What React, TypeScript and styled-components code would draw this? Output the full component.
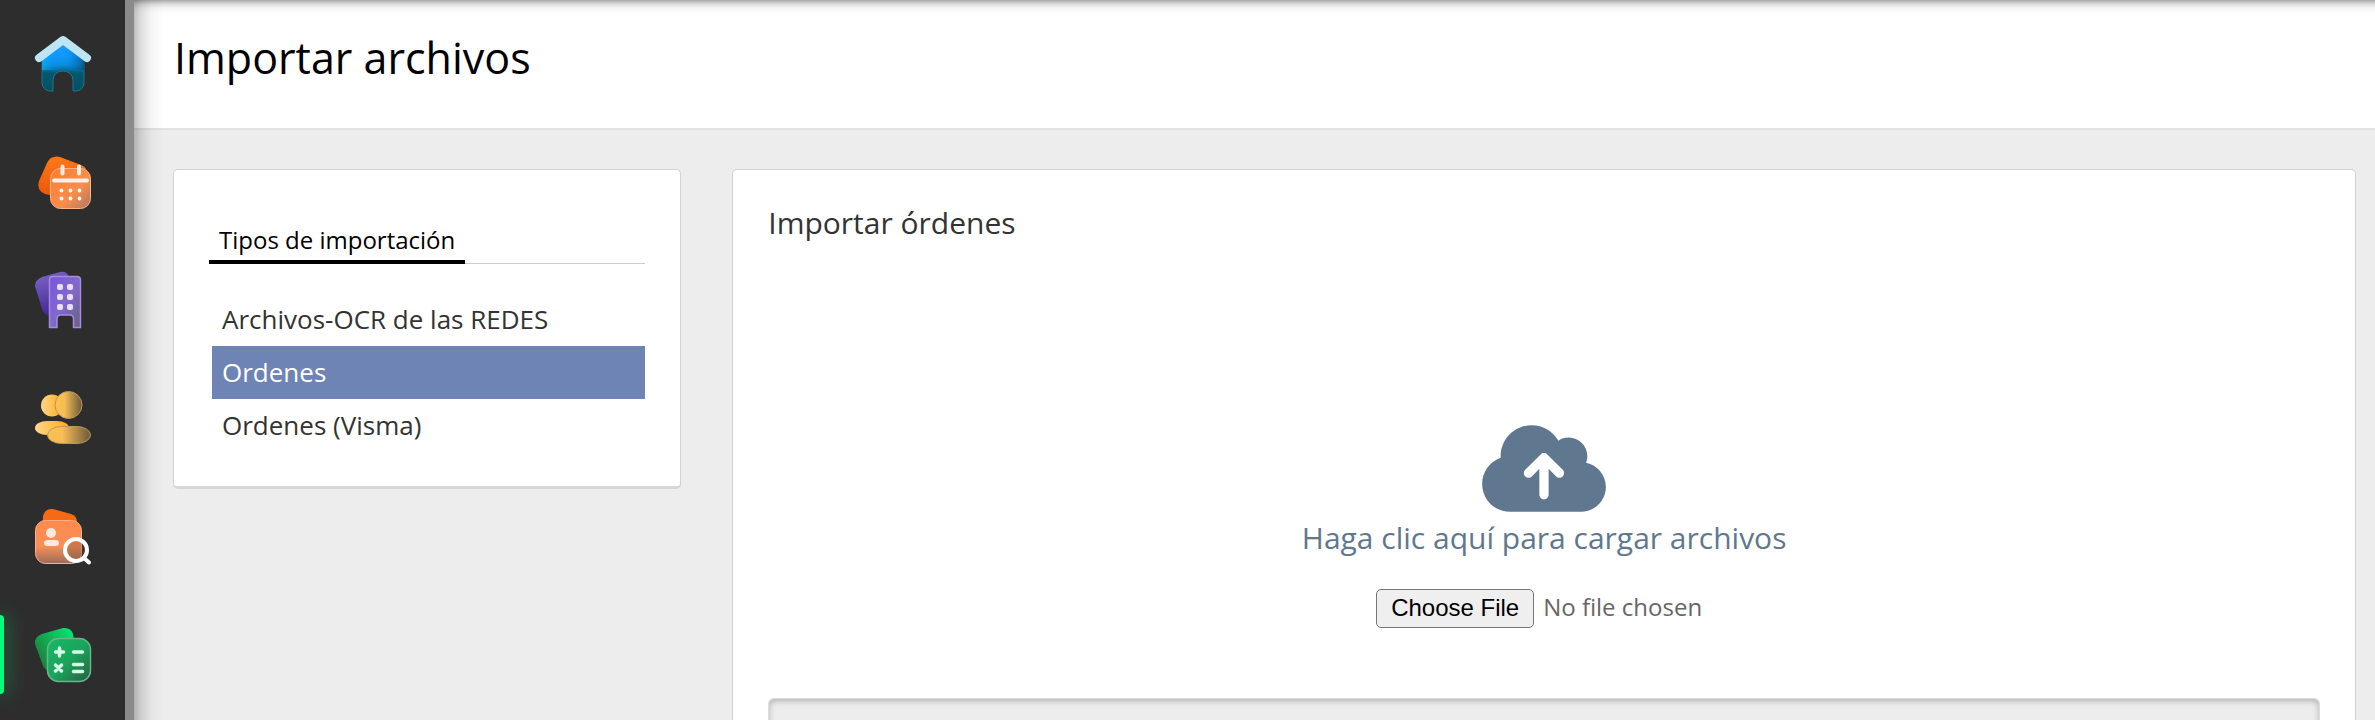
import React from "react";
import styled, { createGlobalStyle } from "styled-components";
import { FaCloudArrowUp } from "react-icons/fa6";

const GlobalStyle = createGlobalStyle`
  *, *::before, *::after { box-sizing: border-box; }
  body {
    margin: 0;
    background: #ededed;
    color: #333;
    font-family: "Open Sans", sans-serif;
  }
`;

const Shell = styled.div`
  display: flex;
  height: 100vh;
  overflow: hidden;
`;

const Sidebar = styled.nav`
  flex: none;
  width: 134px;
  padding-top: 5px;
  background: #2d2d2d;
  border-right: 9px solid #8a8a8a;
`;

const NavLink = styled.a<{ $active?: boolean }>`
  position: relative;
  display: flex;
  align-items: center;
  height: 118px;
  padding-left: 35px;

  &::before {
    content: "";
    display: ${(p) => (p.$active ? "block" : "none")};
    position: absolute;
    left: 0;
    top: 20px;
    width: 4px;
    height: 79px;
    border-radius: 0 4px 4px 0;
    background: #00ff7f;
    box-shadow: 0 0 20px rgba(0, 255, 127, 0.8);
  }
`;

const Icon = styled.svg`
  display: block;
  width: 56px;
  height: 56px;
  overflow: visible;
`;

const Content = styled.main`
  position: relative;
  flex: 1;
  min-width: 0;

  &::after {
    content: "";
    position: absolute;
    inset: 0;
    pointer-events: none;
    background:
      linear-gradient(to right, rgba(0, 0, 0, 0.25), rgba(0, 0, 0, 0.13) 7px, rgba(0, 0, 0, 0.04) 17px, transparent 30px) left / 30px 100% no-repeat,
      linear-gradient(to bottom, rgba(0, 0, 0, 0.34), rgba(0, 0, 0, 0.14) 4px, rgba(0, 0, 0, 0.04) 8px, transparent 14px) top / 100% 14px no-repeat;
  }
`;

const PageHeader = styled.header`
  height: 130px;
  padding: 28px 40px 0;
  background: #fff;
  border-bottom: 2px solid #e2e2e2;
`;

const PageTitle = styled.h1`
  margin: 0;
  color: #000;
  font-size: 43px;
  font-weight: 400;
  line-height: 60px;
`;

const Columns = styled.div`
  display: grid;
  grid-template-columns: 1fr 3fr;
  align-items: start;
  padding-top: 39px;
`;

const Card = styled.section`
  margin: 0 13px 0 39px;
  padding: 36px 35px;
  background: #fff;
  border: 1px solid #d2d2d2;
  border-bottom: 3px solid #d6d6d6;
  border-radius: 5px;
`;

const TypesCard = styled(Card)`
  padding-top: 48px;
  padding-bottom: 34px;
`;

const ImportCard = styled(Card)`
  margin-left: 38px;
  margin-right: 19px;
  padding-top: 32px;
`;

const TabBar = styled.div`
  display: flex;
  border-bottom: 1px solid #ccc;
`;

const Tab = styled.button`
  margin-bottom: -1px;
  padding: 5px 10px 3px;
  border: 0;
  border-bottom: 4px solid #000;
  background: none;
  color: #000;
  font-family: inherit;
  font-size: 24px;
  line-height: 34px;
`;

const TypeList = styled.ul`
  margin: 0;
  padding: 29px 0 0 3px;
  list-style: none;
`;

const TypeLink = styled.a<{ $selected?: boolean }>`
  display: block;
  padding: 0 10px;
  background: ${(p) => (p.$selected ? "#6e84b5" : "transparent")};
  color: ${(p) => (p.$selected ? "#fff" : "#333")};
  font-size: 26px;
  line-height: 53px;
  text-decoration: none;
`;

const CardTitle = styled.h2`
  margin: 0;
  font-size: 30px;
  font-weight: 400;
  line-height: 42px;
`;

const Upload = styled.div`
  display: flex;
  flex-direction: column;
  align-items: center;
  padding: 175px 0 70px;
`;

const UploadLabel = styled.label`
  display: flex;
  flex-direction: column;
  align-items: center;
  color: #60788f;
  font-size: 30px;
  line-height: 40px;
`;

const CloudIcon = styled(FaCloudArrowUp)`
  width: 124px;
  height: 99px;
`;

const FileInput = styled.input`
  width: 336px;
  margin-top: 29px;
  color: #666;
  font-family: inherit;
  font-size: 24px;
  line-height: 39px;

  &::file-selector-button {
    height: 39px;
    margin-right: 9px;
    padding: 0 14px;
    border: 1px solid #767676;
    border-radius: 5px;
    background: #efefef;
    color: #000;
    font-family: "Liberation Sans", Arial, sans-serif;
    font-size: 24px;
  }
`;

const Dropzone = styled.div`
  height: 160px;
  border: 1px solid #dcdcdc;
  border-radius: 6px;
  background: #ededed;
  box-shadow: inset 0 2px 6px rgba(0, 0, 0, 0.25);
`;

const HomeIcon = () => (
  <Icon viewBox="0 0 56 56" aria-hidden="true">
    <defs>
      <linearGradient id="homeBody" x1="0" y1="0" x2="0" y2="1">
        <stop offset="0.3" stopColor="#129bff" />
        <stop offset="0.48" stopColor="#0a8fd8" />
        <stop offset="0.64" stopColor="#04586f" />
        <stop offset="1" stopColor="#045064" />
      </linearGradient>
      <linearGradient id="homeShade">
        <stop offset="0" stopColor="#04b8ff" stopOpacity="0.6" />
        <stop offset="0.5" stopColor="#0880ff" stopOpacity="0" />
        <stop offset="1" stopColor="#044a70" stopOpacity="0.7" />
      </linearGradient>
      <path id="homeShape" d="M7 20 28 5 49 20V47a8 8 0 0 1-8 8H38V44a10 9 0 0 0-20 0V55H15a8 8 0 0 1-8-8Z" />
    </defs>
    <use href="#homeShape" fill="url(#homeBody)" stroke="#24708a" />
    <path d="M7 20 28 5 49 20V34H7Z" fill="url(#homeShade)" />
    <path d="M4 22 28 4 52 22" fill="none" stroke="#bde5f4" strokeWidth="8" strokeLinecap="round" strokeLinejoin="round" />
  </Icon>
);

const CalendarIcon = () => (
  <Icon viewBox="0 0 56 56" aria-hidden="true">
    <defs>
      <linearGradient id="calBack" x1="0" y1="0" x2="0" y2="1">
        <stop offset="0" stopColor="#ff7816" />
        <stop offset="1" stopColor="#e95408" />
      </linearGradient>
      <linearGradient id="calFront" x1="0" y1="0" x2="1" y2="1">
        <stop offset="0" stopColor="#ff7c32" />
        <stop offset="0.6" stopColor="#fb8d4b" />
        <stop offset="1" stopColor="#a87966" />
      </linearGradient>
    </defs>
    <path d="M12 9q4-8 13-6l21 8q8 3 5 11L36 46 10 40q-9-4-6-13Z" fill="url(#calBack)" />
    <rect x="15.5" y="14.500" width="40" height="40" rx="10" fill="url(#calFront)" stroke="#ffb188" />
    <path d="M27.500 12.500v7M44 12.500v7M19 26.500h33" stroke="#fff0e3" strokeWidth="4" strokeLinecap="round" />
    <g fill="#fff">
      <circle cx="26.500" cy="36.500" r="1.900" /><circle cx="35.500" cy="36.500" r="1.900" /><circle cx="44.500" cy="36.500" r="1.900" />
      <circle cx="26.500" cy="44.500" r="1.900" /><circle cx="35.500" cy="44.500" r="1.900" /><circle cx="44.500" cy="44.500" r="1.900" />
    </g>
  </Icon>
);

const BuildingIcon = () => (
  <Icon viewBox="0 0 56 56" aria-hidden="true">
    <defs>
      <linearGradient id="bldBack" x1="0" y1="0" x2="0.3" y2="1">
        <stop offset="0" stopColor="#8068cc" />
        <stop offset="1" stopColor="#432794" />
      </linearGradient>
      <linearGradient id="bldFront" x1="0" y1="0" x2="1" y2="1">
        <stop offset="0" stopColor="#7955dc" />
        <stop offset="0.5" stopColor="#8169cd" />
        <stop offset="1" stopColor="#67617b" />
      </linearGradient>
    </defs>
    <path d="M0 14q0-6 7-9L25 0q7-1 9 5l4 36-22 2q-7 1-9-6Z" fill="url(#bldBack)" />
    <path d="M14.500 55.500V8q0-3.500 3.500-3.500H42q3.500 0 3.500 3.500V55.500H38.500V47q0-4-4-4H26q-4 0-4 4v8.500Z" fill="url(#bldFront)" stroke="#a48bdf" strokeWidth="1.500" />
    <g fill="#eaddff">
      <rect x="22" y="12" width="6" height="6" rx="2" /><rect x="32" y="12" width="6" height="6" rx="2" />
      <rect x="22" y="22" width="6" height="6" rx="2" /><rect x="32" y="22" width="6" height="6" rx="2" />
      <rect x="22" y="32" width="6" height="6" rx="2" /><rect x="32" y="32" width="6" height="6" rx="2" />
    </g>
  </Icon>
);

const PeopleIcon = () => (
  <Icon viewBox="0 0 56 56" aria-hidden="true">
    <defs>
      <linearGradient id="pplBack">
        <stop offset="0" stopColor="#ffd58b" />
        <stop offset="1" stopColor="#ffad16" />
      </linearGradient>
      <linearGradient id="pplFront">
        <stop offset="0" stopColor="#ffc04d" />
        <stop offset="0.35" stopColor="#f6bd58" />
        <stop offset="1" stopColor="#6b5939" />
      </linearGradient>
    </defs>
    <circle cx="17" cy="15.500" r="11" fill="url(#pplBack)" />
    <circle cx="33.500" cy="15" r="13.500" fill="url(#pplFront)" stroke="#b79a62" />
    <rect x="0" y="31" width="34" height="14" rx="12" ry="7" fill="url(#pplBack)" />
    <rect x="12.500" y="36.500" width="43" height="17" rx="14" ry="8.500" fill="url(#pplFront)" stroke="#b79a62" />
  </Icon>
);

const SearchIcon = () => (
  <Icon viewBox="0 0 56 56" aria-hidden="true">
    <defs>
      <linearGradient id="srcFront" x1="0" y1="0" x2="0" y2="1">
        <stop offset="0" stopColor="#ff8b4b" />
        <stop offset="0.6" stopColor="#f88e58" />
        <stop offset="1" stopColor="#9c6c59" />
      </linearGradient>
    </defs>
    <path d="M8 8q2-8 10-7l18 5q6 2 6 8v20H7Z" fill="#f56a12" />
    <rect x="0.500" y="12.500" width="46" height="43" rx="10" fill="url(#srcFront)" stroke="#ffae87" />
    <circle cx="16" cy="25" r="5" fill="#ffe9df" />
    <rect x="9" y="32" width="15" height="6" rx="3.500" fill="#ffe9df" />
    <circle cx="41" cy="42" r="11" fill="#6d4434" fillOpacity="0.3" stroke="#fff" strokeWidth="4" />
    <path d="m49.500 50.500 4.500 4" stroke="#fff" strokeWidth="4" strokeLinecap="round" />
  </Icon>
);

const CalculatorIcon = () => (
  <Icon viewBox="0 0 56 56" aria-hidden="true">
    <defs>
      <linearGradient id="clcBack" x1="0" y1="0.700" x2="1" y2="0">
        <stop offset="0" stopColor="#1d7c38" />
        <stop offset="1" stopColor="#06f17a" />
      </linearGradient>
      <linearGradient id="clcFront" x1="0" y1="0" x2="1" y2="1">
        <stop offset="0" stopColor="#16b866" />
        <stop offset="0.5" stopColor="#1ba45c" />
        <stop offset="1" stopColor="#275f43" />
      </linearGradient>
    </defs>
    <path d="M0 18q-1-7 7-10L28 2q8-1 10 6l4 28-26 9q-7 0-9-8Z" fill="url(#clcBack)" />
    <rect x="12.500" y="12.500" width="43" height="43" rx="11" fill="url(#clcFront)" stroke="#62b886" strokeWidth="1.500" />
    <path d="M20.500 26h8M24.500 22v8M38.500 26h9M38.500 38.500h9M38.500 45.500h9M20.500 39l6 6M26.500 39l-6 6" stroke="#d2ffe4" strokeWidth="3.500" strokeLinecap="round" />
  </Icon>
);

const navItems = [
  { label: "Inicio", Glyph: HomeIcon },
  { label: "Calendario", Glyph: CalendarIcon },
  { label: "Empresas", Glyph: BuildingIcon },
  { label: "Personas", Glyph: PeopleIcon },
  { label: "Buscar", Glyph: SearchIcon },
  { label: "Contabilidad", Glyph: CalculatorIcon, active: true },
];

const importTypes = [
  { name: "Archivos-OCR de las REDES" },
  { name: "Ordenes", selected: true },
  { name: "Ordenes (Visma)" },
];

export default function App() {
  return (
    <>
      <GlobalStyle />
      <Shell>
        <Sidebar>
          {navItems.map(({ label, Glyph, active }) => (
            <NavLink key={label} href="#" aria-label={label} $active={active}>
              <Glyph />
            </NavLink>
          ))}
        </Sidebar>
        <Content>
          <PageHeader>
            <PageTitle>Importar archivos</PageTitle>
          </PageHeader>
          <Columns>
            <TypesCard>
              <TabBar>
                <Tab type="button">Tipos de importación</Tab>
              </TabBar>
              <TypeList>
                {importTypes.map(({ name, selected }) => (
                  <li key={name}>
                    <TypeLink href="#" $selected={selected}>{name}</TypeLink>
                  </li>
                ))}
              </TypeList>
            </TypesCard>
            <ImportCard>
              <CardTitle>Importar órdenes</CardTitle>
              <Upload>
                <UploadLabel htmlFor="orders-file">
                  <CloudIcon aria-hidden="true" />
                  Haga clic aquí para cargar archivos
                </UploadLabel>
                <FileInput id="orders-file" type="file" />
              </Upload>
              <Dropzone />
            </ImportCard>
          </Columns>
        </Content>
      </Shell>
    </>
  );
}
